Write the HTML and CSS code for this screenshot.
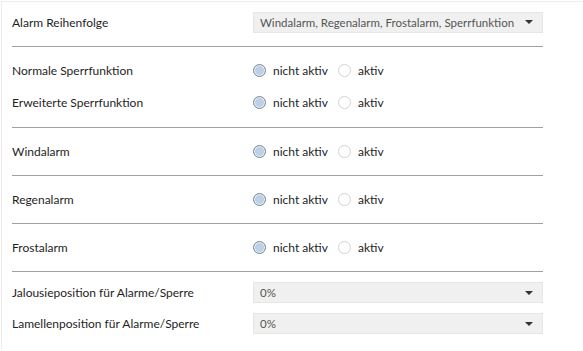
FILE: index.html
```html
<!DOCTYPE html>
<html lang="de">

<head>
    <meta charset="UTF-8">
    <title>Alarme</title>
    <link rel="stylesheet" href="styles.css">
</head>

<body>
    <div class="panel">
        <div class="section">
            <div class="row">
                <span class="label">Alarm Reihenfolge</span>
                <div class="select">
                    <span>Windalarm, Regenalarm, Frostalarm, Sperrfunktion</span>
                    <span class="arrow"></span>
                </div>
            </div>
        </div>
        <div class="section double">
            <div class="row">
                <span class="label">Normale Sperrfunktion</span>
                <div class="radios">
                    <label class="radio checked"><span class="dot"></span>nicht aktiv</label>
                    <label class="radio"><span class="dot"></span>aktiv</label>
                </div>
            </div>
            <div class="row">
                <span class="label">Erweiterte Sperrfunktion</span>
                <div class="radios">
                    <label class="radio checked"><span class="dot"></span>nicht aktiv</label>
                    <label class="radio"><span class="dot"></span>aktiv</label>
                </div>
            </div>
        </div>
        <div class="section">
            <div class="row">
                <span class="label">Windalarm</span>
                <div class="radios">
                    <label class="radio checked"><span class="dot"></span>nicht aktiv</label>
                    <label class="radio"><span class="dot"></span>aktiv</label>
                </div>
            </div>
        </div>
        <div class="section">
            <div class="row">
                <span class="label">Regenalarm</span>
                <div class="radios">
                    <label class="radio checked"><span class="dot"></span>nicht aktiv</label>
                    <label class="radio"><span class="dot"></span>aktiv</label>
                </div>
            </div>
        </div>
        <div class="section">
            <div class="row">
                <span class="label">Frostalarm</span>
                <div class="radios">
                    <label class="radio checked"><span class="dot"></span>nicht aktiv</label>
                    <label class="radio"><span class="dot"></span>aktiv</label>
                </div>
            </div>
        </div>
        <div class="section last">
            <div class="row">
                <span class="label">Jalousieposition für Alarme/Sperre</span>
                <div class="select">
                    <span>0%</span>
                    <span class="arrow"></span>
                </div>
            </div>
            <div class="row">
                <span class="label">Lamellenposition für Alarme/Sperre</span>
                <div class="select">
                    <span>0%</span>
                    <span class="arrow"></span>
                </div>
            </div>
        </div>
    </div>
</body>
</html>
```

FILE: styles.css
```css
body {
    margin: 0;
    background-color: #ffffff;
    font-family: "Lato", "Open Sans", sans-serif;
    font-size: 12px;
    color: #1e1e1e;
}

.panel {
    margin: 1px 0 0 1px;
    border-left: 1px solid #ececec;
    border-top: 1px solid #ececec;
    padding: 4px 40px 0 10px;
    height: 349px;
    box-sizing: border-box;
}

.section {
    border-bottom: 1px solid #a0a0a0;
    padding: 7px 0 8px 0;
}

.section:first-child {
    padding-top: 0;
}

.section.double {
    padding-bottom: 9px;
}

.section.last {
    border-bottom: none;
    padding-top: 5px;
}

.row {
    display: flex;
    align-items: center;
    height: 32px;
}

.section.last .row {
    height: 31px;
}

.label {
    width: 241px;
    flex-shrink: 0;
}

.select {
    flex: 1;
    display: flex;
    align-items: center;
    justify-content: space-between;
    height: 21px;
    box-sizing: border-box;
    padding: 0 9px 0 6px;
    background-color: #f0f0f0;
    border: 1px solid #e6e6e6;
    color: #555555;
    font-size: 11.5px;
    white-space: nowrap;
}

.arrow {
    width: 0;
    height: 0;
    border-left: 4px solid transparent;
    border-right: 4px solid transparent;
    border-top: 4px solid #333333;
}

.radios {
    display: flex;
    align-items: center;
    gap: 10px;
}

.radio {
    display: flex;
    align-items: center;
    gap: 7px;
}

.dot {
    width: 11px;
    height: 11px;
    border-radius: 50%;
    border: 1px solid #d2d2d2;
    background-color: #ffffff;
}

.radio.checked .dot {
    border-color: #7d8894;
    background-color: #bcd0e6;
    box-shadow: inset 0 0 0 1px #e6eef7;
}
```
